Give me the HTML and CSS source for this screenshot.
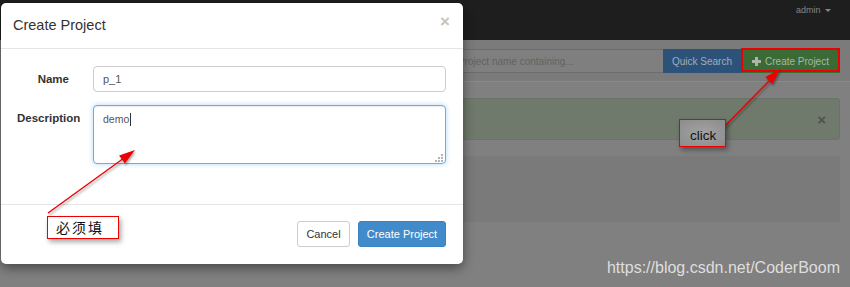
FILE: index.html
```html
<html>
<head>
<meta name="viewport" content="width=device-width, initial-scale=1" />
<title>Projects - Create Project</title>
<link rel="stylesheet" href="styles.css">
</head>
<body>

<div class="page">
    <nav class="navbar">
        <span class="user">admin <span class="caret"></span></span>
    </nav>

    <div class="toolbar">
        <form class="search">
            <input class="search-input" type="text" placeholder="Project name containing...">
            <button type="button" class="btn-quick">Quick Search</button>
            <button type="button" class="btn-new">
                <svg class="plus" width="9" height="9" viewBox="0 0 9 9"><path d="M3 0h3v3h3v3H6v3H3V6H0V3h3z" /></svg>
                Create Project
            </button>
        </form>
    </div>

    <div class="content">
        <div class="alert"><span class="alert-close">&times;</span></div>
        <div class="panel"></div>
    </div>
</div>

<div class="modal">
    <div class="modal-header">
        <h4 class="modal-title">Create Project</h4>
        <span class="modal-close">&times;</span>
    </div>
    <div class="modal-body">
        <label class="control-label name-label" for="pname">Name</label>
        <input id="pname" class="form-control" type="text" value="p_1">
        <label class="control-label desc-label" for="pdesc">Description</label>
        <div class="textarea-wrap">
            <textarea id="pdesc" class="form-control focused">demo</textarea>
            <span class="text-caret"></span>
            <svg class="grip" width="8" height="8" viewBox="0 0 8 8">
                <rect x="6" y="0" width="2" height="2" />
                <rect x="3" y="3" width="2" height="2" />
                <rect x="6" y="3" width="2" height="2" />
                <rect x="0" y="6" width="2" height="2" />
                <rect x="3" y="6" width="2" height="2" />
                <rect x="6" y="6" width="2" height="2" />
            </svg>
        </div>
    </div>
    <div class="modal-footer">
        <button type="button" class="btn btn-default">Cancel</button>
        <button type="button" class="btn btn-primary">Create Project</button>
    </div>
</div>

<!-- annotations drawn over the screenshot -->
<div class="mark-box"></div>
<svg class="arrows" width="850" height="287" viewBox="0 0 850 287">
    <line x1="48" y1="213" x2="124" y2="158" />
    <polygon points="135,150 124.9,163.5 119.1,155.4" />
    <line x1="722" y1="129" x2="770" y2="80" />
    <polygon points="780,69 772.5,84 765.3,77" />
</svg>
<div class="note note-required">必须填</div>
<div class="note note-click">click</div>

<div class="watermark">https://blog.csdn.net/CoderBoom</div>

</body>
</html>
```

FILE: styles.css
```css
body { margin: 0; width: 850px; height: 287px; overflow: hidden; position: relative; background-color: #808080; font-family: "Liberation Sans", Arial, sans-serif; }

/* page behind the dialog, already dimmed */
.navbar { height: 40px; background-color: #1e1e1e; display: flex; justify-content: flex-end; align-items: flex-start; padding-right: 19px; }
.navbar .user { font-size: 9px; color: #858585; margin-top: 5px; }
.navbar .caret { display: inline-block; border-top: 3px solid #858585; border-left: 3px solid transparent; border-right: 3px solid transparent; vertical-align: middle; margin-left: 2px; }

.toolbar { height: 42px; box-sizing: border-box; padding: 9px 10px 0 0; background-color: #7b7b7b; border-bottom: 1px solid #898989; display: flex; justify-content: flex-end; }
.search { display: flex; margin: 0; height: 24px; }
.search-input { width: 216px; box-sizing: border-box; border: 1px solid #6c6c6c; border-right: none; background-color: #7f7f7f; padding: 0 10px; font: 10px "Liberation Sans", Arial, sans-serif; color: #5e5e5e; outline: none; }
.search-input::placeholder { color: #626262; }
.search button { border: none; font: 10px "Liberation Sans", Arial, sans-serif; height: 24px; padding: 0; }
.btn-quick { width: 78px; background-color: #2c5279; color: #a3adb8; }
.btn-new { width: 99px; background-color: #3a6a35; color: #a9b8a6; display: flex; align-items: center; justify-content: center; gap: 4px; }
.btn-new .plus { fill: #a9b8a6; }

.content { padding: 16px 10px 0 10px; }
.alert { height: 42px; box-sizing: border-box; background-color: #6f796c; border: 1px solid #6a7466; border-radius: 3px; display: flex; justify-content: flex-end; align-items: center; padding-right: 13px; }
.alert-close { font-size: 15px; font-weight: bold; color: #505050; }
.panel { height: 66px; margin-top: 16px; background-color: #7a7a7a; border-radius: 3px; }

/* dialog */
.modal { position: absolute; left: 1px; top: 3px; width: 462px; background-color: #fff; border-radius: 5px; box-shadow: 0 4px 12px rgba(0, 0, 0, 0.45); }
.modal-header { height: 46px; box-sizing: border-box; border-bottom: 1px solid #e5e5e5; display: flex; justify-content: space-between; align-items: flex-start; padding: 0 12px 0 12px; }
.modal-title { margin: 0; padding-top: 14px; font-size: 14.5px; font-weight: normal; color: #333; }
.modal-close { font-size: 17px; font-weight: bold; color: #c4c4c4; line-height: 17px; margin-top: 10px; margin-right: 1px; }

.modal-body { display: grid; grid-template-columns: 63px 353px; column-gap: 13px; row-gap: 13px; padding: 17px 17px 40px 16px; }
.control-label { font-size: 11.5px; font-weight: bold; color: #333; text-align: right; }
.name-label { align-self: center; margin-right: 11px; }
.desc-label { padding-top: 7px; }
.form-control { box-sizing: border-box; width: 353px; border: 1px solid #ccc; border-radius: 4px; padding: 0 9px; font: 11px "Liberation Sans", Arial, sans-serif; color: #555; outline: none; }
input.form-control { height: 26px; }
.textarea-wrap { position: relative; height: 59px; }
textarea.form-control { height: 59px; padding-top: 7px; resize: none; display: block; font-size: 10.5px; }
.form-control.focused { border-color: #66afe9; box-shadow: inset 0 1px 1px rgba(0, 0, 0, 0.075), 0 0 5px rgba(102, 175, 233, 0.5); }
.text-caret { position: absolute; left: 37px; top: 8px; width: 1px; height: 13px; background-color: #333; }
.grip { position: absolute; right: 3px; bottom: 2px; fill: #b5b5b5; }

.modal-footer { border-top: 1px solid #e5e5e5; display: flex; justify-content: flex-end; gap: 8px; padding: 16px 17px 17px 0; }
.btn { height: 26px; border-radius: 3px; font: 11px "Liberation Sans", Arial, sans-serif; padding: 0; }
.btn-default { width: 53px; background-color: #fff; border: 1px solid #ccc; color: #333; }
.btn-primary { width: 88px; background-color: #428bca; border: 1px solid #3a82c2; color: #fff; }

/* annotations */
.mark-box { position: absolute; left: 741px; top: 48px; width: 99px; height: 24px; box-sizing: border-box; border: 2px solid #e00; }
.arrows { position: absolute; left: 0; top: 0; filter: drop-shadow(1px 2px 1px rgba(0, 0, 0, 0.35)); }
.arrows line { stroke: #e00; stroke-width: 1.4; }
.arrows polygon { fill: #e00; }
.note { position: absolute; box-sizing: border-box; border: 1px solid #e00; color: #111; box-shadow: 2px 3px 5px rgba(0, 0, 0, 0.35); }
.note-required { left: 47px; top: 216px; width: 72px; height: 23px; background-color: #fff; padding: 1px 0 0 8px; font: 14px "Noto Sans CJK SC", sans-serif; letter-spacing: 2px; line-height: 19px; }
.note-click { left: 679px; top: 119px; width: 47px; height: 28px; background: radial-gradient(ellipse at center, #a2a2a2 0%, #8c8c8c 100%); padding: 8px 0 0 10px; font: 13.5px "Liberation Sans", Arial, sans-serif; line-height: 16px; }

.watermark { position: absolute; right: 10px; bottom: 10px; font: 16px "Liberation Sans", Arial, sans-serif; color: #dedede; }
```
